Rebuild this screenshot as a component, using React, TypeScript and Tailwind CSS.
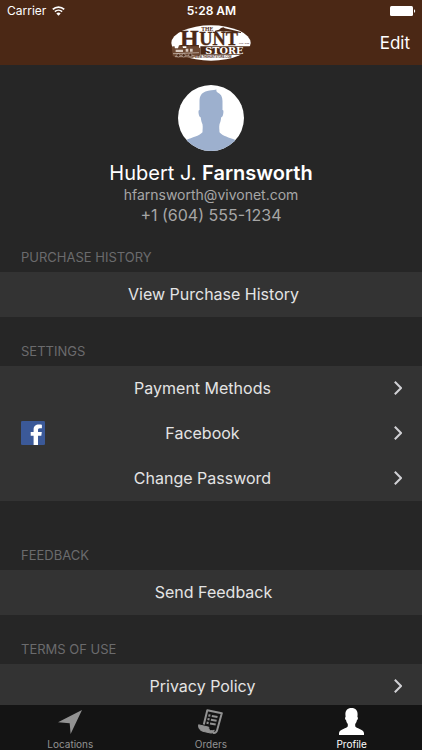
import type { ReactNode } from "react";

interface RowProps {
  label: string;
  icon?: ReactNode;
  chevron?: boolean;
}

function HuntStoreLogo() {
  return (
    <svg viewBox="0 0 240 108" className="h-9 w-20" role="img" aria-label="The Hunt Store">
      <ellipse cx="120" cy="54" rx="119" ry="53" fill="#fff" />
      {/* rifle */}
      <path d="M132 17l12-3 6-5 7-2 5 3 48 11v3l-44-5-8 1-10-1-16 2z" fill="#4b2815" />
      {/* locomotive */}
      <path
        d="M2 66l8-3 2 7h9l3-9h10l2 8h10v-9h38v8h4v22l-6 3H74l-8 5H14l-9-6z"
        fill="#6b4630"
      />
      <path d="M14 74h22v7H14zM44 71h8v9h-8zM57 71h8v9h-8z" fill="#d9cbc1" />
      <path d="M6 86l78-3M12 94l68-2" stroke="#d9cbc1" strokeWidth="2" />
      <circle cx="22" cy="91" r="5" fill="#4b2815" stroke="#fff" />
      <circle cx="38" cy="91" r="5" fill="#4b2815" stroke="#fff" />
      <circle cx="58" cy="90" r="5" fill="#4b2815" stroke="#fff" />
      <g fill="#4b2815" fontFamily="'Liberation Serif', serif" fontWeight="700">
        <text x="109" y="19" fontSize="17" textAnchor="middle">THE</text>
        <g stroke="#4b2815" strokeWidth="1">
          <text x="27" y="62" fontSize="72">H</text>
          <text x="85" y="60" fontSize="55">UNT</text>
        </g>
        <text x="204" y="56" fontSize="7">EST. 1946</text>
      </g>
      <path d="M88 64h152v25H88z" fill="#4b2815" />
      <text
        x="160"
        y="87"
        fontSize="29"
        fontWeight="700"
        textAnchor="middle"
        fill="#fff"
        fontFamily="'DejaVu Serif', serif"
      >
        STORE
      </text>
      <text
        x="126"
        y="100"
        fontSize="8"
        fontWeight="700"
        textAnchor="middle"
        fill="#4b2815"
        fontFamily="'Liberation Sans', sans-serif"
      >
        WWW.THEHUNTSTORE.COM
      </text>
    </svg>
  );
}

function WifiIcon() {
  return (
    <svg viewBox="0 0 13 10" className="h-[10px] w-[13px]" fill="none" stroke="#fff" aria-hidden="true">
      <path d="M.8 3.4a8.2 8.2 0 0 1 11.4 0" strokeWidth="1.8" />
      <path d="M2.9 5.7a5.2 5.2 0 0 1 7.2 0" strokeWidth="1.7" />
      <path d="M6.5 9.8L4.3 7.6a3.1 3.1 0 0 1 4.4 0z" fill="#fff" stroke="none" />
    </svg>
  );
}

function BatteryIcon() {
  return (
    <svg viewBox="0 0 26 10" className="h-[10px] w-[26px]" fill="#fff" aria-hidden="true">
      <rect width="23" height="10" rx="1.5" />
      <path d="M24 3.2c1.6 .5 1.6 3.1 0 3.6z" />
    </svg>
  );
}

function Avatar() {
  return (
    <svg viewBox="0 0 66 66" className="size-[66px] rounded-full bg-white" aria-hidden="true">
      <path
        d="M21.5 25V16c0-5 2-8 6-9.500 3.500-1.500 8-1 11-2-.4 1.300 0 2 .8 2.800 3.500 1.500 5.200 4.500 5.200 8.700v9c1.200 0 1 2 .7 4s-.9 3.200-2 3.200c-.3 3-.9 5-1.700 7-.6 3 0 5.500 0 8 3 4 9.500 5 16 7.800V66H8V55c6.500-2.800 13-4 16.500-7.800 0-2.500.5-5 0-8-.9-2-1.500-4-1.800-7-1.100 0-1.700-1.200-2-3.200s-.4-4 .8-4z"
        fill="#9db0ce"
      />
    </svg>
  );
}

function FacebookIcon() {
  return (
    <svg viewBox="0 0 24 24" className="-mr-6 size-6" aria-hidden="true">
      <rect width="24" height="24" rx="1.3" fill="#3b5998" />
      <path
        d="M12.6 24v-9.300H9.700v-3.600h2.900V8.400C12.600 5.200 14.700 3.500 17.800 3.500c1.400 0 2.700.1 3.100.2v3.500h-2c-1.500 0-1.900.8-1.900 1.900v2h3.800l-.5 3.600H17V24z"
        fill="#fff"
      />
    </svg>
  );
}

function LocationsIcon() {
  return (
    <svg viewBox="0 0 24 24" className="size-6" fill="currentColor" aria-hidden="true">
      <path d="M24 0L0 12.2l11.7 1.1L12.600 24z" />
    </svg>
  );
}

function OrdersIcon() {
  return (
    <svg viewBox="0 0 25 25" className="size-[25px]" fill="none" stroke="currentColor" aria-hidden="true">
      <path
        d="M5.8 15.5L9.3 1.3l14.5 2.9-4.700 17c-.6 2-2.300 3-4.300 2.600"
        strokeWidth="2"
        strokeLinejoin="round"
      />
      <path
        d="M.6 15.8l10.2 2.4c-.3 2.200.8 3.800 3.400 3.500.8 0 1.500-.3 2-.7-.4 2-1.700 3.400-3.700 3L5 22.300C2 21.500.3 19.500.6 15.800z"
        fill="currentColor"
        strokeWidth="1"
      />
      <path d="M10.4 6.3l2 .4M9.5 10l2 .4M8.600 13.700l2 .4" strokeWidth="2.2" />
      <path d="M13.8 7l5.700 1.100M12.900 10.700l5.700 1.100M12 14.400l5.700 1.100" strokeWidth="2" />
    </svg>
  );
}

function ProfileIcon() {
  return (
    <svg viewBox="0 0 25 27" className="h-[27px] w-[25px]" fill="currentColor" aria-hidden="true">
      <path d="M12.5 0c4.1 0 6.2 2.6 6.1 6.5l-.2 2.500c.9 0 .7 2.800-.5 3.200-.3 1.700-1 2.900-1.700 3.700v2.300c.8 2.400 8.100 2.500 8.800 6.800v2H0v-2c.7-4.300 8-4.400 8.800-6.800v-2.300c-.7-.8-1.400-2-1.700-3.700-1.200-.4-1.400-3.200-.5-3.200l-.2-2.500C6.300 2.600 8.400 0 12.500 0z" />
    </svg>
  );
}

function Row({ label, icon, chevron }: RowProps) {
  return (
    <button
      type="button"
      className={`flex h-[45px] w-full items-center bg-[#333333] pb-0.5 pl-[21px] text-base text-[#e4e4e4] ${
        chevron ? "pr-5" : "pr-4"
      }`}
    >
      {icon}
      <span className="flex-1 text-center">{label}</span>
      {chevron && (
        <svg viewBox="0 0 8 14" className="ml-[10px] h-[14px] w-2" fill="none" stroke="#d0d0d4" strokeWidth="2" aria-hidden="true">
          <path d="M.8 .8L7 7 .8 13.2" />
        </svg>
      )}
    </button>
  );
}

function Section({ title, children }: { title: string; children: ReactNode }) {
  return (
    <section>
      <h2 className="flex h-[49px] items-end pb-[5px] pl-[21px] text-[13px] leading-5 text-[#6b6b6d]">
        {title}
      </h2>
      {children}
    </section>
  );
}

const TABS = [
  { label: "Locations", icon: <LocationsIcon />, active: false },
  { label: "Orders", icon: <OrdersIcon />, active: false },
  { label: "Profile", icon: <ProfileIcon />, active: true },
];

export default function App() {
  return (
    <div className="flex h-screen flex-col bg-[#262626] font-[Inter,sans-serif] text-white">
      <header className="shrink-0 bg-[#4b2815]">
        <div className="grid h-5 grid-cols-3 items-center pr-1.5 pl-[7px] pt-px text-xs leading-4">
          <div className="flex items-center gap-1.5">
            Carrier <WifiIcon />
          </div>
          <span className="text-center font-semibold">5:28 AM</span>
          <div className="flex justify-end">
            <BatteryIcon />
          </div>
        </div>
        <div className="grid h-[45px] grid-cols-3 items-center px-3">
          <h1 className="col-start-2 flex justify-center">
            <HuntStoreLogo />
          </h1>
          <button type="button" className="justify-self-end text-[17px] leading-6">
            Edit
          </button>
        </div>
      </header>

      <main className="flex-1 overflow-y-auto [scrollbar-width:none]">
        <div className="flex flex-col items-center pt-5 text-[#a6a6a6]">
          <Avatar />
          <p className="mt-2 text-xl leading-7 text-white">
            Hubert J. <span className="font-semibold">Farnsworth</span>
          </p>
          <p className="text-sm leading-4">hfarnsworth@vivonet.com</p>
          <p className="text-base leading-6">+1 (604) 555-1234</p>
        </div>

        <div className="-mt-1">
          <Section title="PURCHASE HISTORY">
            <Row label="View Purchase History" />
          </Section>
          <Section title="SETTINGS">
            <Row label="Payment Methods" chevron />
            <Row label="Facebook" icon={<FacebookIcon />} chevron />
            <Row label="Change Password" chevron />
          </Section>
          <div className="mt-5">
            <Section title="FEEDBACK">
              <Row label="Send Feedback" />
            </Section>
          </div>
          <Section title="TERMS OF USE">
            <Row label="Privacy Policy" chevron />
          </Section>
        </div>
      </main>

      <nav className="grid h-[45px] shrink-0 grid-cols-3 bg-[#141414]">
        {TABS.map((tab) => (
          <a
            key={tab.label}
            href={`#${tab.label.toLowerCase()}`}
            className={`flex flex-col items-center justify-between pt-[3px] text-[10px] leading-3 ${
              tab.active ? "text-white" : "text-[#929292]"
            }`}
          >
            <span className="flex h-[27px] items-center">{tab.icon}</span>
            {tab.label}
          </a>
        ))}
      </nav>
    </div>
  );
}
